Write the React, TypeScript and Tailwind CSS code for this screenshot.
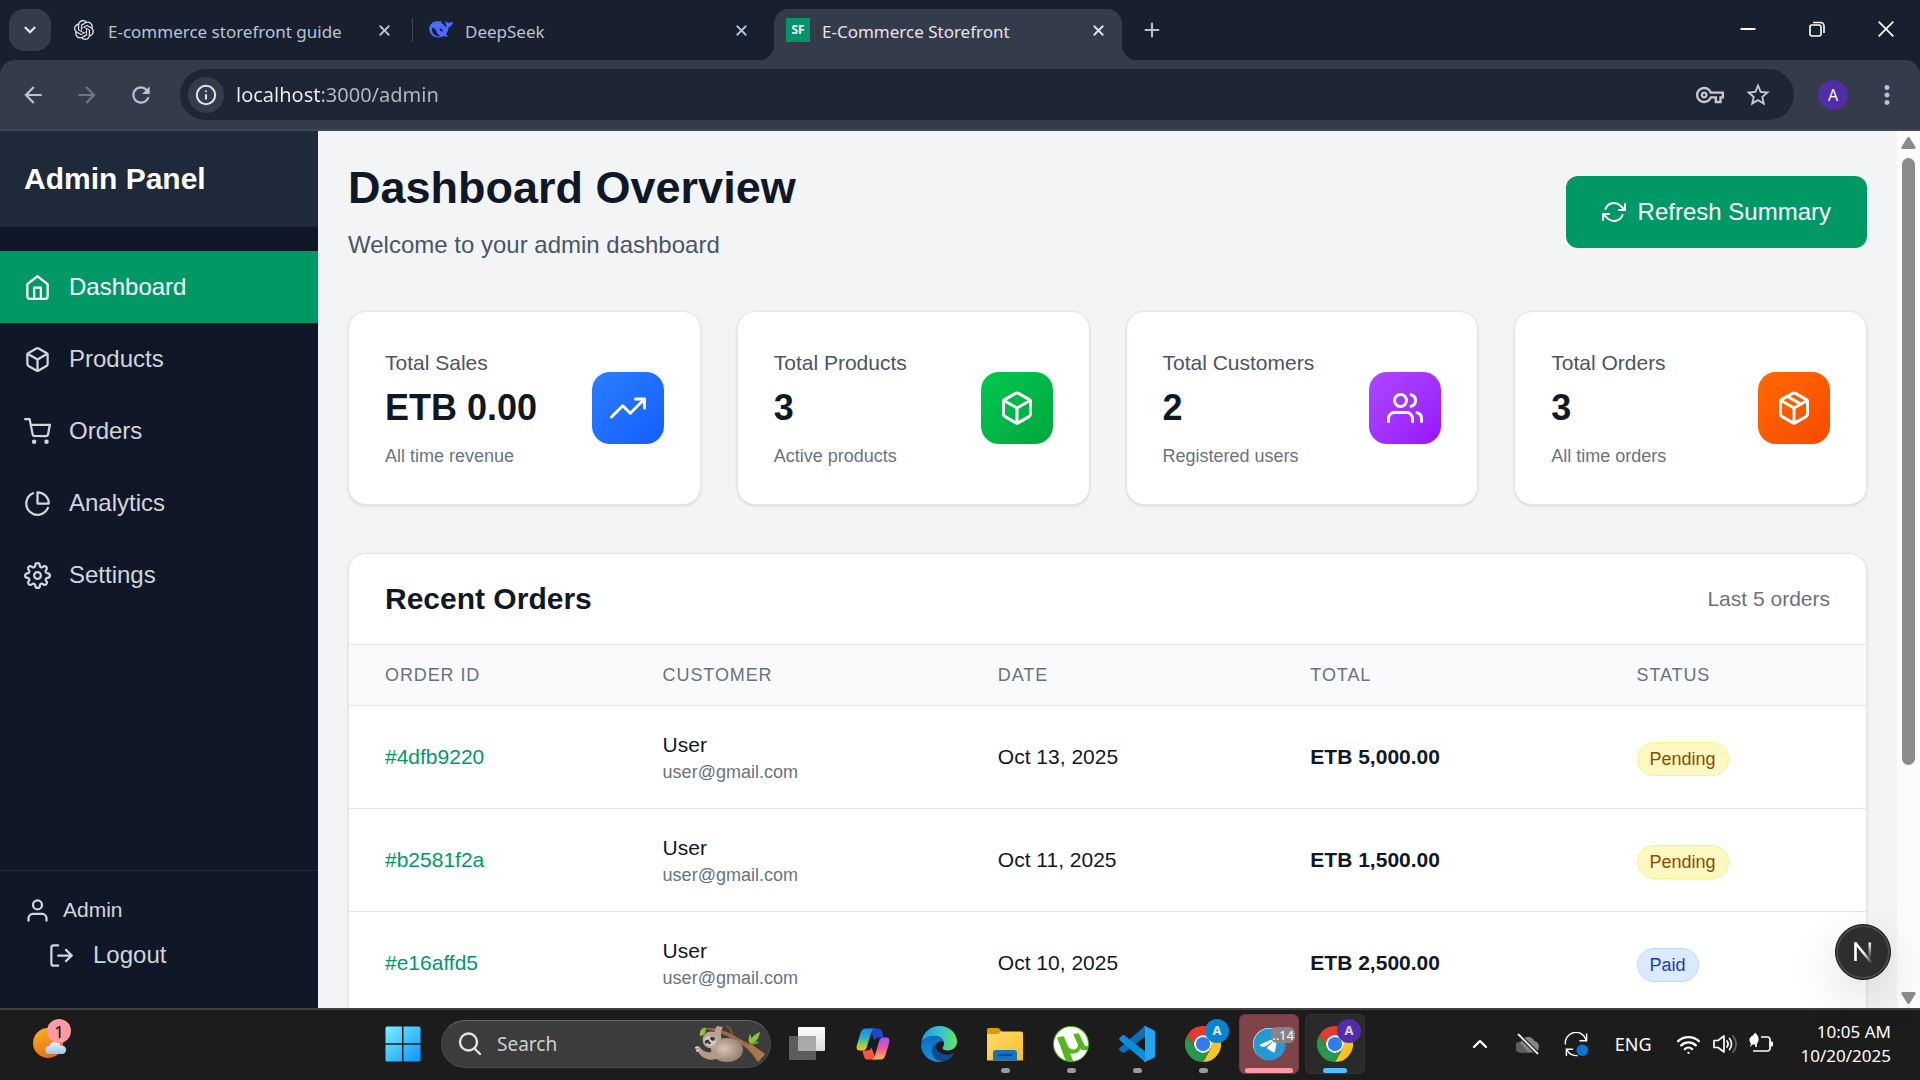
import type { ComponentType, ReactNode } from "react";
import {
  FiBox,
  FiHome,
  FiLogOut,
  FiPackage,
  FiPieChart,
  FiRefreshCw,
  FiSettings,
  FiShoppingCart,
  FiTrendingUp,
  FiUser,
  FiUsers,
} from "react-icons/fi";
import {
  MdArrowBack,
  MdArrowForward,
  MdMoreVert,
  MdOutlineVpnKey,
  MdRefresh,
  MdStarBorder,
} from "react-icons/md";
import { SiOpenai, SiUtorrent } from "react-icons/si";
import { FaTelegram } from "react-icons/fa6";
import { ChevronDown, ChevronUp, Info, Plus, Wifi, X } from "lucide-react";

type IconType = ComponentType<{ size?: number; className?: string }>;

/* ---------- logos ---------- */

function DeepSeekLogo() {
  return (
    <svg width="24" height="24" viewBox="0 0 24 24" fill="#4d6bfe" aria-hidden="true">
      <path
        fillRule="evenodd"
        d="M1 7.500C3 4 7 2.600 10.200 3.600c.9-.9 2-.7 2.200.1 0 .8.6 1.700 1.700 2.600 1.300 1 2.200 2 2.700 3.200.8-.9.9-2 .2-3.100-.7-1.200-.8-2.500-.1-3.700.5 1.300 1.500 2.100 2.900 2.200 1.300-.9 2.700-1.200 4.200-.9-.3 2.700-1.700 4.500-4.300 5.200-.3 2.800-1.200 5.200-2.900 7.200.9.8 1.700 1.200 2.700 1.400-1.500 1-3.500 1.100-5 .3C8.200 21.600.8 18.500.3 11.600.2 10 .4 8.600 1 7.500ZM3.400 9.600c-1.300 3 .4 6.400 3 8 1.800 1.100 3.600 1.200 5 .5-1.500-.8-2.500-2-3.400-3.700-1-2-2.400-4.300-4.600-4.800Zm7.300.3c1.500.3 2.900 1.600 3.400 3.400-1 .5-1.900.3-2.500-.4-.5-.7-1-1.300-.9-3Z"
      />
    </svg>
  );
}

function NextLogo() {
  return (
    <svg width="32" height="32" viewBox="0 0 32 32" fill="none" aria-hidden="true">
      <defs>
        <linearGradient id="next-diag" x1="16" y1="17" x2="24" y2="28" gradientUnits="userSpaceOnUse">
          <stop stopColor="#fff" />
          <stop offset="1" stopColor="#fff" stopOpacity="0" />
        </linearGradient>
        <linearGradient id="next-bar" x1="0" y1="6" x2="0" y2="23" gradientUnits="userSpaceOnUse">
          <stop stopColor="#fff" />
          <stop offset="1" stopColor="#fff" stopOpacity="0" />
        </linearGradient>
      </defs>
      <path d="M8 6.500L25 27.500" stroke="url(#next-diag)" strokeWidth="2.600" />
      <path d="M8.500 25V6.500" stroke="#fff" strokeWidth="2.600" />
      <rect x="21.500" y="6.500" width="2.600" height="16" fill="url(#next-bar)" />
    </svg>
  );
}

function WindowsLogo() {
  return (
    <svg width="36" height="36" viewBox="0 0 36 36" aria-hidden="true">
      <defs>
        <linearGradient id="win" x1="0" y1="0" x2="1" y2="1" gradientUnits="objectBoundingBox">
          <stop stopColor="#7af0ff" />
          <stop offset="1" stopColor="#0a94fb" />
        </linearGradient>
      </defs>
      <path
        fill="url(#win)"
        d="M2 .5h15v16.700H.5V2A1.500 1.500 0 0 1 2 .5ZM18.500.5H34A1.500 1.500 0 0 1 35.500 2v15.200h-17ZM.5 18.700H17v16.800H2A1.500 1.500 0 0 1 .5 34ZM18.500 18.700h17V34a1.500 1.500 0 0 1-1.500 1.500H18.500Z"
      />
    </svg>
  );
}

function Sloth() {
  return (
    <svg width="72" height="40" viewBox="0 0 72 40" fill="none" aria-hidden="true">
      <defs>
        <radialGradient id="fur" cx=".4" cy=".45" r=".65">
          <stop stopColor="#d8c5b6" />
          <stop offset="1" stopColor="#927868" />
        </radialGradient>
      </defs>
      <path d="M32 2c4 1 6 4 6 10" stroke="#7a5230" strokeWidth="2" />
      <path d="M6 4c14-1 26 2 38 10 5 3 10 5 15 8l12 8-7 8c-6-8-10-14-19-19C33 11 20 6 6 4Z" fill="#9a6c43" />
      <path d="M57 20l14 10-7 8c-3-7-7-11-12-15Z" fill="#a87849" />
      <path d="M23 2c-4 5-3 12 0 15l5-2c-2-5-1-9 1-12Z" fill="#b8a292" />
      <path d="M43 16c-5 6-6 14-3 20l6-4c-2-6 0-11 3-15Z" fill="#8f7566" />
      <ellipse cx="33" cy="26" rx="16" ry="12" fill="url(#fur)" />
      <path d="M22 25c-6 6-13 3-17-3L1 23l3 5c5 8 15 10 22 5Z" fill="#b19a8a" />
      <path d="M1 24l3-1M2 27l3-1" stroke="#e8d9cc" strokeWidth="1.500" />
      <circle cx="17" cy="16" r="8.500" fill="#b9a594" />
      <ellipse cx="16" cy="17" rx="6" ry="5" fill="#d9cabb" />
      <ellipse cx="13" cy="17.500" rx="2.500" ry="1.800" fill="#3c3535" transform="rotate(-30 13 17.500)" />
      <ellipse cx="18.500" cy="14.800" rx="2.500" ry="1.800" fill="#3c3535" transform="rotate(20 18.500 14.800)" />
      <circle cx="15.500" cy="19" r="1.200" fill="#2b2525" />
      <path d="M12 4C8 4 5 6 6 12c4 0 6-3 6-8ZM66 8c-5 2-10 6-10 12 6-1 9-6 10-12ZM56 10c-1 3-2 6-1 9 3-2 3-6 1-9Z" fill="#8cc33a" />
      <path d="M65 18c-3-1-6 0-8 2 3 1 6 0 8-2Z" fill="#6aa52a" />
    </svg>
  );
}

function TaskView() {
  return (
    <svg width="36" height="36" viewBox="0 0 36 36" aria-hidden="true">
      <defs>
        <linearGradient id="tv" x1="0" y1="0" x2="0" y2="1">
          <stop stopColor="#fff" />
          <stop offset="1" stopColor="#dcdcdc" />
        </linearGradient>
      </defs>
      <rect x="0" y="10" width="27" height="24" rx="1" fill="#5c5c5c" />
      <rect x="9" y="1" width="27" height="24" rx="1" fill="url(#tv)" />
      <rect x="9" y="10" width="18" height="15" fill="#a9a9a9" />
    </svg>
  );
}

function CopilotLogo() {
  return (
    <svg width="34" height="34" viewBox="0 0 34 34" aria-hidden="true">
      <defs>
        <linearGradient id="cp-a" x1="0" y1="0" x2="0" y2="1">
          <stop stopColor="#1b86e8" />
          <stop offset=".45" stopColor="#2bb5c8" />
          <stop offset=".75" stopColor="#a5c94a" />
          <stop offset="1" stopColor="#f5c518" />
        </linearGradient>
        <linearGradient id="cp-b" x1="0" y1="0" x2="0" y2="1">
          <stop stopColor="#a352f5" />
          <stop offset=".5" stopColor="#f0569c" />
          <stop offset="1" stopColor="#fdb44b" />
        </linearGradient>
      </defs>
      <path d="M14 1.500h8.500c2 0 2.800 1 3.500 3l1.800 6H23c-3 0-3.500 1-4.500 3Z" fill="#1f45cf" />
      <path d="M20 32.500h-8.500c-2 0-2.800-1-3.500-3l-1.800-6H11c3 0 3.500-1 4.500-3Z" fill="#f2573f" />
      <path d="M9.500 1.500H18c-2 1-2.700 3-3.500 6l-3.500 12c-.8 2.800-2 4-4.500 4H3.500C1 23.500 0 21.500.8 18.500L4.500 6C5.500 3 7 1.500 9.500 1.500Z" fill="url(#cp-a)" />
      <path d="M24.500 32.500H16c2-1 2.700-3 3.500-6L23 14.500c.8-2.800 2-4 4.500-4h3c2.500 0 3.500 2 2.700 5L29.500 28c-1 3-2.500 4.500-5 4.500Z" fill="url(#cp-b)" />
    </svg>
  );
}

function EdgeLogo() {
  return (
    <svg width="36" height="36" viewBox="0 0 36 36" aria-hidden="true">
      <defs>
        <linearGradient id="eg-a" x1="0" y1=".4" x2="1" y2=".5">
          <stop stopColor="#1a9ee0" />
          <stop offset=".5" stopColor="#35c1d6" />
          <stop offset="1" stopColor="#66e25a" />
        </linearGradient>
        <linearGradient id="eg-b" x1="0" y1="0" x2="0" y2="1">
          <stop stopColor="#0c6fc4" />
          <stop offset="1" stopColor="#1491e4" />
        </linearGradient>
      </defs>
      <path d="M.3 16.500C1.500 7 9 0 18.300 0 28.500 0 36 7.500 36 15.500c0 5.500-4 9-9 9-3.500 0-5.500-1.300-5.500-2.500 0-1 1.500-1.700 1.500-4.500 0-4-4-7.500-9.500-7.500-6 0-11 2.500-13.200 6.500Z" fill="url(#eg-a)" />
      <path d="M0 18.500C1.500 13 7 9.800 13.500 10c4.500.2 8 2.500 9.200 5.500-3.700-1.500-8.700 1.500-9.700 7-.9 5.500 2.500 11.500 8.500 13-1.200.3-2.300.5-3.500.5C8 36 0 28 0 18.500Z" fill="url(#eg-b)" />
      <path d="M14.300 18c-3.300 2.500-4.300 7-2.300 11.500C14 34 18.500 36.300 23 35.300c4-1 7.500-3.500 9.700-7 .4-.8-.2-1.200-.9-.9C24 31 14.500 27 14.300 18Z" fill="#114a8b" />
    </svg>
  );
}

function FolderLogo() {
  return (
    <svg width="36" height="36" viewBox="0 0 36 36" aria-hidden="true">
      <defs>
        <linearGradient id="fo" x1="0" y1="0" x2="1" y2="1">
          <stop stopColor="#ffdc6e" />
          <stop offset="1" stopColor="#f8bd24" />
        </linearGradient>
      </defs>
      <path d="M0 3.500A1.500 1.500 0 0 1 1.500 2h9c1 0 1.500.4 2 1L15 6v5H0Z" fill="#dd9a08" />
      <path d="M0 8h11l3-2.500h20A1.800 1.800 0 0 1 36 7v27.500H0Z" fill="url(#fo)" />
      <path d="M6 34.500V27a3 3 0 0 1 3-3h18a3 3 0 0 1 3 3v7.500Z" fill="#1473c6" />
      <path d="M11 29h14" stroke="#0b4a86" strokeWidth="2" />
    </svg>
  );
}

function UTorrentLogo() {
  return (
    <span className="grid size-9 place-items-center rounded-full bg-[#55b81a] text-white">
      <SiUtorrent size={34} />
    </span>
  );
}

function VsCodeLogo() {
  return (
    <svg width="36" height="36" viewBox="0 0 36 36" aria-hidden="true">
      <path d="M26 0v10.500L5.500 26.500c-.8.6-1.500.6-2.200 0l-2.500-2.200c-.9-.8-.9-1.700 0-2.500Z" fill="#0b70b8" />
      <path d="M26 36V25.500L5.500 9.500c-.8-.6-1.500-.6-2.200 0L.8 11.700c-.9.8-.9 1.700 0 2.500Z" fill="#0a8ddb" />
      <path d="M26 0l8.800 4.200c.8.4 1.200 1 1.200 1.800v24c0 .8-.4 1.400-1.200 1.800L26 36c-1 0-1.500-.5-2-1 1.200.5 2 0 2-1.200V2.200C26 1 25.200.5 24 1c.5-.5 1-1 2-1Z" fill="#24a5f2" />
    </svg>
  );
}

function ChromeLogo() {
  return (
    <svg width="36" height="36" viewBox="0 0 48 48" aria-hidden="true">
      <path d="M3.200 12A24 24 0 0 1 44.800 12H24A12 12 0 0 0 13.600 30Z" fill="#e33b2e" />
      <path d="M44.800 12A24 24 0 0 1 24 48L34.400 30A12 12 0 0 0 24 12Z" fill="#fcc31e" />
      <path d="M24 48A24 24 0 0 1 3.200 12L13.600 30A12 12 0 0 0 34.400 30Z" fill="#27984a" />
      <circle cx="24" cy="24" r="12" fill="#fff" />
      <circle cx="24" cy="24" r="9.500" fill="#2f7bf0" />
    </svg>
  );
}

function WeatherIcon() {
  return (
    <svg width="36" height="36" viewBox="0 0 36 36" aria-hidden="true">
      <defs>
        <linearGradient id="sun" x1=".2" y1="0" x2=".6" y2="1">
          <stop stopColor="#f7ae28" />
          <stop offset="1" stopColor="#ea6d10" />
        </linearGradient>
        <linearGradient id="cloud" x1="0" y1="0" x2="0" y2="1">
          <stop stopColor="#e8f3ff" />
          <stop offset="1" stopColor="#9cc3f2" />
        </linearGradient>
      </defs>
      <circle cx="17" cy="17" r="15" fill="url(#sun)" />
      <path d="M18 28a4 4 0 0 1 .5-8c.5-3 3-4.500 5.500-4.500 3 0 5 1.700 5.500 4.200A4.200 4.200 0 0 1 32 28Z" fill="url(#cloud)" />
    </svg>
  );
}

/* ---------- browser chrome ---------- */

function BrowserTab({ icon, title, active = false }: { icon: ReactNode; title: string; active?: boolean }) {
  return (
    <div
      className={
        active
          ? "relative flex h-[51px] w-[348px] items-start rounded-t-[15px] bg-[#343c4c] px-3 pt-[9px] text-[#e3e5ea]"
          : "flex h-[51px] w-[348px] items-start px-3 pt-[9px] text-[#b9c3d6]"
      }
    >
      {active && (
        <>
          <span className="absolute bottom-0 right-full size-[15px] bg-[radial-gradient(circle_at_0_0,transparent_15px,#343c4c_15px)]" />
          <span className="absolute bottom-0 left-full size-[15px] bg-[radial-gradient(circle_at_100%_0,transparent_15px,#343c4c_15px)]" />
        </>
      )}
      <button type="button" className="flex min-w-0 flex-1 items-start gap-3 text-left">
        <span className="grid size-6 shrink-0 place-items-center">{icon}</span>
        <span className="truncate text-[17px] leading-[27px]">{title}</span>
      </button>
      <button type="button" aria-label={`Close ${title}`} className="grid size-6 place-items-center">
        <X size={17} strokeWidth={2.500} />
      </button>
    </div>
  );
}

function TabStrip() {
  return (
    <div className="flex h-[60px] bg-[#18202f] pt-[9px]">
      <button
        type="button"
        aria-label="Search tabs"
        className="ml-[9px] mr-[9px] grid size-[42px] shrink-0 place-items-center rounded-[15px] bg-[#343c4c] text-[#e3e5ea]"
      >
        <ChevronDown size={18} strokeWidth={3} />
      </button>
      <BrowserTab title="E-commerce storefront guide" icon={<SiOpenai size={20} className="text-[#e3e5ea]" />} />
      <span className="mx-1 mt-[9px] h-6 w-px bg-[#3d4657]" />
      <BrowserTab title="DeepSeek" icon={<DeepSeekLogo />} />
      <span className="w-[9px]" />
      <BrowserTab
        active
        title="E-Commerce Storefront"
        icon={
          <span className="grid size-6 place-items-center bg-[#059467] text-[12px] font-bold text-white">SF</span>
        }
      />
      <button type="button" aria-label="New tab" className="ml-[18px] mt-[9px] grid size-6 place-items-center text-[#b9c3d6]">
        <Plus size={22} strokeWidth={2.300} />
      </button>
      <div className="ml-auto flex h-10 text-white">
        <button type="button" aria-label="Minimize" className="grid w-[69px] place-items-center">
          <svg width="16" height="16" viewBox="0 0 16 16" fill="none" stroke="currentColor" strokeWidth="2">
            <path d="M.5 8h15" />
          </svg>
        </button>
        <button type="button" aria-label="Restore" className="grid w-[69px] place-items-center">
          <svg width="16" height="16" viewBox="0 0 16 16" fill="none" stroke="currentColor" strokeWidth="1.600">
            <rect x="1" y="4" width="11" height="11" rx="2" />
            <path d="M4 1.500h7.500a3.500 3.500 0 0 1 3.500 3.500v7" />
          </svg>
        </button>
        <button type="button" aria-label="Close window" className="grid w-[69px] place-items-center">
          <svg width="16" height="16" viewBox="0 0 16 16" fill="none" stroke="currentColor" strokeWidth="1.700">
            <path d="M.7.7l14.600 14.600M15.300.7L.7 15.300" />
          </svg>
        </button>
      </div>
    </div>
  );
}

function Toolbar() {
  return (
    <div className="bg-[#18202f]">
      <div className="flex h-[71px] items-center rounded-t-[15px] border-b-2 border-[#3f4654] bg-[#343c4c] pl-5 pr-[18px] text-[#b9c3d6]">
        <div className="flex gap-7">
          <button type="button" aria-label="Back">
            <MdArrowBack size={26} />
          </button>
          <button type="button" aria-label="Forward" className="text-[#6f7685]">
            <MdArrowForward size={26} />
          </button>
          <button type="button" aria-label="Reload">
            <MdRefresh size={26} />
          </button>
        </div>
        <div className="ml-[26px] flex h-[51px] flex-1 items-center rounded-full bg-[#1e2636] pl-2 pr-[22px] text-[#c7c9ce]">
          <button
            type="button"
            aria-label="View site information"
            className="grid size-9 place-items-center rounded-full bg-[#343c4c] text-[#e3e5ea]"
          >
            <Info size={22} strokeWidth={2.200} />
          </button>
          <input
            type="text"
            aria-label="Address"
            defaultValue="localhost:3000/admin"
            className="ml-3 h-8 min-w-0 flex-1 bg-linear-to-r from-[#eef0f4] from-[84px] to-[#b6bac2] to-[84px] bg-clip-text text-xl text-transparent outline-none"
          />
          <button type="button" aria-label="Passwords" className="mr-5">
            <MdOutlineVpnKey size={28} />
          </button>
          <button type="button" aria-label="Bookmark this tab">
            <MdStarBorder size={28} />
          </button>
        </div>
        <button
          type="button"
          aria-label="Profile"
          className="ml-6 grid size-[30px] place-items-center rounded-full bg-[#512da8] text-[16px] text-white"
        >
          A
        </button>
        <button type="button" aria-label="Menu" className="ml-6">
          <MdMoreVert size={30} />
        </button>
      </div>
    </div>
  );
}

/* ---------- admin app ---------- */

const navItems: { label: string; icon: IconType; active?: boolean }[] = [
  { label: "Dashboard", icon: FiHome, active: true },
  { label: "Products", icon: FiBox },
  { label: "Orders", icon: FiShoppingCart },
  { label: "Analytics", icon: FiPieChart },
  { label: "Settings", icon: FiSettings },
];

function Sidebar() {
  return (
    <aside className="flex w-[318px] shrink-0 flex-col bg-gray-900 text-gray-300">
      <div className="flex h-24 items-center bg-gray-800 px-6 pb-0.5 text-[30px] font-bold text-white">Admin Panel</div>
      <nav className="mt-6 flex-1">
        {navItems.map(({ label, icon: Icon, active }) => (
          <a
            key={label}
            href="#"
            className={
              active
                ? "flex h-[72px] items-center gap-[18px] bg-[#009966] px-6 text-2xl text-white"
                : "flex h-[72px] items-center gap-[18px] px-6 text-2xl"
            }
          >
            <Icon size={27} />
            {label}
          </a>
        ))}
      </nav>
      <div className="border-t border-gray-800 px-6 pb-[35px] pt-6">
        <div className="flex h-[30px] items-center gap-3 text-[21px]">
          <FiUser size={27} />
          Admin
        </div>
        <button type="button" className="mt-3 flex h-9 items-center gap-[18px] px-6 text-2xl">
          <FiLogOut size={27} />
          Logout
        </button>
      </div>
    </aside>
  );
}

const stats: { label: string; value: string; note: string; icon: IconType; tint: string }[] = [
  { label: "Total Sales", value: "ETB 0.00", note: "All time revenue", icon: FiTrendingUp, tint: "from-blue-500 to-blue-600" },
  { label: "Total Products", value: "3", note: "Active products", icon: FiBox, tint: "from-green-500 to-green-600" },
  { label: "Total Customers", value: "2", note: "Registered users", icon: FiUsers, tint: "from-purple-500 to-purple-600" },
  { label: "Total Orders", value: "3", note: "All time orders", icon: FiPackage, tint: "from-orange-500 to-orange-600" },
];

const orders = [
  { id: "#4dfb9220", date: "Oct 13, 2025", total: "ETB 5,000.00", status: "Pending" },
  { id: "#b2581f2a", date: "Oct 11, 2025", total: "ETB 1,500.00", status: "Pending" },
  { id: "#e16affd5", date: "Oct 10, 2025", total: "ETB 2,500.00", status: "Paid" },
];

const cardClass = "rounded-[18px] border border-gray-200 bg-white shadow-sm";

function Dashboard() {
  return (
    <main className="min-w-0 flex-1 overflow-hidden bg-gray-100 p-[30px] text-gray-900">
      <header className="mb-12 flex items-center justify-between">
        <div>
          <h1 className="text-[45px] font-bold leading-[54px]">Dashboard Overview</h1>
          <p className="mt-3 text-2xl leading-9 text-gray-600">Welcome to your admin dashboard</p>
        </div>
        <button
          type="button"
          className="flex h-[72px] items-center gap-3 rounded-xl bg-[#009966] px-9 text-2xl text-white"
        >
          <FiRefreshCw size={24} />
          Refresh Summary
        </button>
      </header>

      <section className="mb-12 grid grid-cols-4 gap-9">
        {stats.map(({ label, value, note, icon: Icon, tint }) => (
          <div key={label} className={`${cardClass} flex items-center justify-between p-9`}>
            <div>
              <p className="text-[21px] leading-[30px] text-gray-600">{label}</p>
              <p className="mt-1.5 text-4xl font-bold leading-[48px]">{value}</p>
              <p className="mt-3 text-lg leading-6 text-gray-500">{note}</p>
            </div>
            <div className={`grid size-[72px] place-items-center rounded-[18px] bg-linear-to-br text-white ${tint}`}>
              <Icon size={36} />
            </div>
          </div>
        ))}
      </section>

      <section className={`${cardClass} overflow-hidden pb-9`}>
        <div className="flex items-center justify-between border-b border-gray-200 px-9 py-6">
          <h2 className="text-[30px] font-bold leading-[42px]">Recent Orders</h2>
          <span className="text-[21px] text-gray-500">Last 5 orders</span>
        </div>
        <table className="w-full table-fixed text-left text-[21px] leading-[30px]">
          <colgroup>
            <col className="w-[18.300%]" />
            <col className="w-[22.100%]" />
            <col className="w-[20.600%]" />
            <col className="w-[21.500%]" />
            <col />
          </colgroup>
          <thead>
            <tr className="h-[60px] border-b border-gray-200 bg-gray-50 text-lg uppercase tracking-wider text-gray-500">
              {["Order ID", "Customer", "Date", "Total", "Status"].map((h) => (
                <th key={h} scope="col" className="px-9 font-normal">
                  {h}
                </th>
              ))}
            </tr>
          </thead>
          <tbody>
            {orders.map((o) => (
              <tr key={o.id} className="border-b border-gray-200">
                <td className="px-9 py-6">
                  <a href="#" className="text-[#009966]">
                    {o.id}
                  </a>
                </td>
                <td className="px-9 py-6">
                  <div>User</div>
                  <div className="text-lg leading-6 text-gray-500">user@gmail.com</div>
                </td>
                <td className="px-9 py-6">{o.date}</td>
                <td className="px-9 py-6 font-bold">{o.total}</td>
                <td className="px-9 py-6">
                  <span
                    className={
                      o.status === "Paid"
                        ? "mt-1 inline-block rounded-full border border-blue-200 bg-blue-100 px-3 py-1 text-lg leading-6 text-blue-800"
                        : "mt-1 inline-block rounded-full border border-yellow-200 bg-yellow-100 px-3 py-1 text-lg leading-6 text-yellow-800"
                    }
                  >
                    {o.status}
                  </span>
                </td>
              </tr>
            ))}
          </tbody>
        </table>
      </section>
    </main>
  );
}

function ScrollTrack() {
  return (
    <div className="flex w-[23px] shrink-0 flex-col items-center justify-between bg-[#fcfcfc] pb-1 pt-[6px] text-[#8b8b8b]">
      <svg width="15" height="12" viewBox="0 0 15 12" fill="currentColor" aria-hidden="true">
        <path d="M7.500 0c.6 0 1 .3 1.400.9l5.600 9c.5.900 0 2-1.200 2H1.700C.5 12 0 10.800.5 9.900l5.600-9C6.500.3 6.900 0 7.500 0Z" />
      </svg>
      <div className="mb-auto mt-[9px] h-[70%] w-[13px] rounded-full bg-[#8b8b8b]" />
      <svg width="15" height="12" viewBox="0 0 15 12" fill="currentColor" aria-hidden="true">
        <path d="M7.500 12c.6 0 1-.3 1.400-.9l5.600-9c.5-.9 0-2.100-1.200-2.100H1.700C.5 0 0 1.200.5 2.100l5.600 9c.4.6.8.9 1.400.9Z" />
      </svg>
    </div>
  );
}

/* ---------- taskbar ---------- */

function TaskButton({
  label,
  children,
  mark = "none",
}: {
  label: string;
  children: ReactNode;
  mark?: "none" | "open" | "alert" | "focus";
}) {
  return (
    <button
      type="button"
      aria-label={label}
      className={
        mark === "alert"
          ? "relative grid size-[60px] place-items-center rounded-md border border-[#70393f] bg-[#7f444a]"
          : mark === "focus"
            ? "relative grid size-[60px] place-items-center rounded-md border border-[#333333] bg-[#2a2a2a]"
            : "relative grid size-[60px] place-items-center"
      }
    >
      {children}
      {mark === "open" && <span className="absolute bottom-px h-[5px] w-[9px] rounded-full bg-[#9a9a9a]" />}
      {mark === "alert" && <span className="absolute bottom-0 h-[5px] w-12 rounded-full bg-[#ff99a4]" />}
      {mark === "focus" && <span className="absolute bottom-0 h-[5px] w-6 rounded-full bg-[#4cc2ff]" />}
    </button>
  );
}

function Taskbar() {
  return (
    <footer className="flex h-[72px] shrink-0 items-center border-t-2 border-[#404040] bg-[#1c1c1c] pb-0.5 text-white">
      <div className="w-[373px] pl-[31px]">
        <button type="button" aria-label="Widgets" className="relative block">
          <WeatherIcon />
          <span className="absolute -top-[7px] left-4 grid size-6 place-items-center rounded-full bg-[#ff99a4] text-[17px] leading-none text-black">
            1
          </span>
        </button>
      </div>
      <div className="flex items-center gap-[6px]">
        <TaskButton label="Start">
          <WindowsLogo />
        </TaskButton>
        <label className="ml-0.5 flex h-12 w-[330px] items-center rounded-full border border-[#4a4a4a] border-t-[#666666] bg-[#3c3c3c] pl-4 pr-1">
          <svg width="24" height="24" viewBox="0 0 24 24" fill="none" stroke="#e4e4ea" strokeWidth="2.400" strokeLinecap="round" aria-hidden="true">
            <circle cx="10.500" cy="10" r="8.500" />
            <path d="M16.500 16.500L22 22" />
          </svg>
          <input
            type="text"
            aria-label="Search"
            placeholder="Search"
            className="ml-[15px] min-w-0 flex-1 bg-transparent text-[19px] outline-none placeholder:text-[#cfcfcf]"
          />
          <Sloth />
        </label>
        <TaskButton label="Task view">
          <TaskView />
        </TaskButton>
        <TaskButton label="Copilot">
          <CopilotLogo />
        </TaskButton>
        <TaskButton label="Edge">
          <EdgeLogo />
        </TaskButton>
        <TaskButton label="File Explorer" mark="open">
          <FolderLogo />
        </TaskButton>
        <TaskButton label="uTorrent" mark="open">
          <UTorrentLogo />
        </TaskButton>
        <TaskButton label="Visual Studio Code" mark="open">
          <VsCodeLogo />
        </TaskButton>
        <TaskButton label="Chrome" mark="open">
          <ChromeLogo />
          <span className="absolute right-1 top-[5px] grid size-6 place-items-center rounded-full bg-[#0a84d0] text-[13px] font-bold text-[#d5ecfb]">
            A
          </span>
        </TaskButton>
        <TaskButton label="Telegram" mark="alert">
          <span className="grid size-8 place-items-center rounded-full bg-white text-[#2499d3]">
            <FaTelegram size={33} />
          </span>
          <span className="absolute right-[3px] top-3 rounded-md bg-[#868686] px-px text-[13px] leading-4">..14</span>
        </TaskButton>
        <TaskButton label="Chrome, Admin" mark="focus">
          <ChromeLogo />
          <span className="absolute right-[3px] top-1 grid size-6 place-items-center rounded-full bg-[#512da8] text-[13px] font-bold text-[#dcd3f2]">
            A
          </span>
        </TaskButton>
      </div>
      <div className="ml-auto flex items-center pr-[29px]">
        <button type="button" aria-label="Show hidden icons" className="mr-6">
          <ChevronUp size={24} strokeWidth={2.300} />
        </button>
        <button type="button" aria-label="OneDrive" className="mr-6">
          <svg width="24" height="24" viewBox="0 0 24 24" fill="none" aria-hidden="true">
            <path d="M5.500 20.500a5.500 5.500 0 0 1-.6-10.700A7.500 7.500 0 0 1 18.500 9a6 6 0 0 1 .3 11.500Z" fill="#858585" />
            <path d="M3 9.500l9.500 11h-7A5.500 5.500 0 0 1 3 9.500Z" fill="#5d5d5d" />
            <path d="M2 2l20 20" stroke="#1c1c1c" strokeWidth="4" />
            <path d="M2 2l20 20" stroke="#eee" strokeWidth="1.800" />
          </svg>
        </button>
        <button type="button" aria-label="Updates" className="mr-[26px]">
          <svg width="25" height="25" viewBox="0 0 26 26" fill="none" stroke="#fff" strokeWidth="1.500" aria-hidden="true">
            <path d="M1.500 13A11 11 0 0 1 23 8.500M23.500 1.500v7.500h-7.500M14 24.500A11 11 0 0 1 3 18.500M2.500 25v-7H9.500" />
            <circle cx="19" cy="19" r="6" fill="#0078d7" stroke="none" />
          </svg>
        </button>
        <button type="button" className="mr-6 text-[18px]">
          ENG
        </button>
        <button type="button" aria-label="Network, volume and battery" className="mr-7 flex items-center gap-3">
          <Wifi size={25} strokeWidth={2.200} />
          <svg width="24" height="24" viewBox="0 0 24 24" fill="none" stroke="#fff" strokeWidth="1.700" strokeLinejoin="round" strokeLinecap="round" aria-hidden="true">
            <path d="M1 8.500h4L11 4v16l-6-4.500H1Z" />
            <path d="M14 9a5 5 0 0 1 0 6M16.500 6.500a8.500 8.500 0 0 1 0 11" />
            <path d="M20 4a12 12 0 0 1 0 16" stroke="#666" />
          </svg>
          <svg width="24" height="24" viewBox="0 0 24 24" fill="none" stroke="#fff" strokeWidth="1.700" aria-hidden="true">
            <path d="M12 5h6.500A2.500 2.500 0 0 1 21 7.500v9a2.500 2.500 0 0 1-2.500 2.500H4" />
            <path d="M21 10v4h2.500v-4Z" fill="#fff" strokeWidth="1" />
            <path d="M6 .5C8.500 3 10 5 9.500 8.500 9 12 6 13 3.500 12.500L1 15l1-3.500C-.5 9 0 5.500 3 4 4.500 3 5.500 2 6 .5Z" fill="#fff" stroke="none" />
            <path d="M7 15V9.500" />
          </svg>
        </button>
        <button type="button" className="text-right text-[17px] leading-6">
          10:05 AM
          <br />
          10/20/2025
        </button>
      </div>
    </footer>
  );
}

export default function App() {
  return (
    <div className="flex h-screen flex-col overflow-hidden font-['Noto_Sans',sans-serif]">
      <TabStrip />
      <Toolbar />
      <div className="relative flex min-h-0 flex-1 font-['Liberation_Sans',Arial,sans-serif]">
        <Sidebar />
        <Dashboard />
        <ScrollTrack />
        <button
          type="button"
          aria-label="Open developer tools"
          className="absolute bottom-7 right-[29px] grid size-14 place-items-center rounded-full border border-[#171717] bg-[#2e2e2e] shadow-[inset_0_0_0_2px_#4a4a4a,0_16px_48px_rgba(0,0,0,0.140)]"
        >
          <NextLogo />
        </button>
      </div>
      <Taskbar />
    </div>
  );
}
